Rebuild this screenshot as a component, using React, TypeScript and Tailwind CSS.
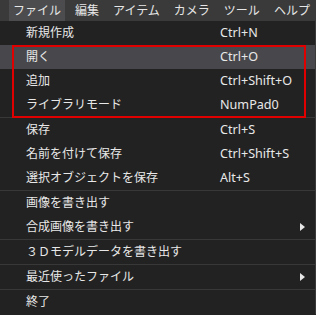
import React from "react";

type Item = { label: string; shortcut?: string; sub?: boolean; active?: boolean };

const groups: Item[][] = [
  [
    { label: "新規作成", shortcut: "Ctrl+N" },
    { label: "開く", shortcut: "Ctrl+O", active: true },
    { label: "追加", shortcut: "Ctrl+Shift+O" },
    { label: "ライブラリモード", shortcut: "NumPad0" },
  ],
  [
    { label: "保存", shortcut: "Ctrl+S" },
    { label: "名前を付けて保存", shortcut: "Ctrl+Shift+S" },
    { label: "選択オブジェクトを保存", shortcut: "Alt+S" },
  ],
  [
    { label: "画像を書き出す" },
    { label: "合成画像を書き出す", sub: true },
  ],
  [{ label: "３Ｄモデルデータを書き出す" }],
  [{ label: "最近使ったファイル", sub: true }],
  [{ label: "終了" }],
];

const menus = ["ファイル", "編集", "アイテム", "カメラ", "ツール", "ヘルプ"];

function Row({ item }: { item: Item }) {
  return (
    <div
      className={`flex h-[24px] items-center ${item.active ? "bg-[#48484c]" : ""}`}
    >
      <div className="w-[220px] shrink-0 pl-[26px] whitespace-nowrap">{item.label}</div>
      <div className="flex-1 whitespace-nowrap text-[12.6px]">{item.shortcut}</div>
      {item.sub && (
        <svg width="5" height="8" viewBox="0 0 5 8" className="mr-[10px]">
          <path d="M0 0 L5 4 L0 8 Z" fill="#e6e6e6" />
        </svg>
      )}
    </div>
  );
}

export default function App() {
  return (
    <div
      className="relative w-[316px] h-[315px] overflow-hidden bg-[#222222] text-[12px] text-[#e8e8e8]"
      style={{ fontFamily: '"Noto Sans", "Noto Sans CJK JP", sans-serif' }}
    >
      <div className="flex h-[21px] items-center gap-[6px] bg-[#3a3a3a] pl-[9px] text-[12px] text-[#e6e6e6] whitespace-nowrap">
        {menus.map((m, i) => (
          <div
            key={m}
            className={`flex h-full items-center px-[4px] ${i === 0 ? "bg-[#4c4c4e]" : ""}`}
          >
            {m}
          </div>
        ))}
      </div>
      <div className="border-r border-[#3a3a3a]">
        {groups.map((g, gi) => (
          <div key={gi}>
            {gi > 0 && <div className="h-px bg-[#383838]" />}
            {g.map((it) => (
              <Row key={it.label} item={it} />
            ))}
          </div>
        ))}
      </div>
      <div className="pointer-events-none absolute left-[12px] top-[45px] h-[73px] w-[294px] border-2 border-[#e00000]" />
    </div>
  );
}
